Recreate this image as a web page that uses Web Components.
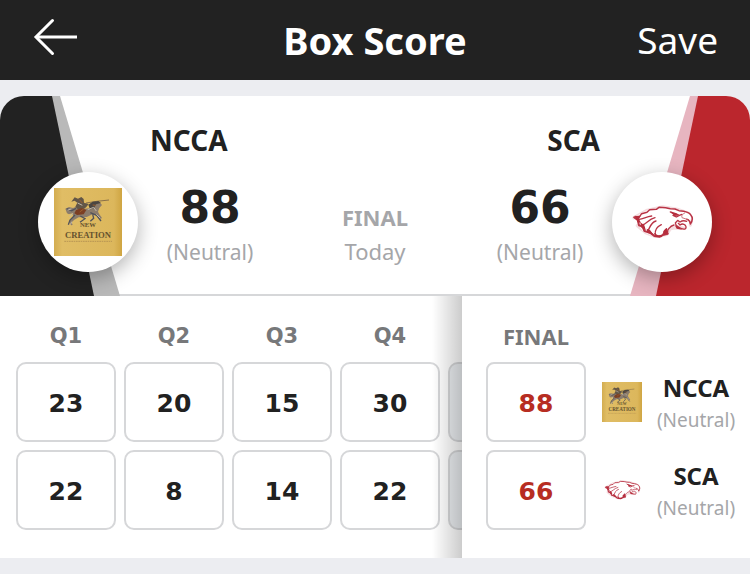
<!DOCTYPE html>
<html lang="en">
<head>
<meta charset="utf-8">
<meta name="viewport" content="width=device-width, initial-scale=1">
<title>Box Score</title>
<style>
  body {
    margin: 0;
    background: #ecedf1;
    color: #212121;
    font-family: "Noto Sans", "Open Sans", sans-serif;
    --digits: "DejaVu Sans", "Noto Sans", sans-serif;
    --line: #d6d7d9;
    --muted: #a5a6a9;
    --label: #77787a;
  }
</style>
</head>
<body>
<box-score-page></box-score-page>

<script>
const define = (name, html, setup) => {
  const template = document.createElement('template');
  template.innerHTML = html;
  customElements.define(name, class extends HTMLElement {
    constructor() {
      super();
      this.attachShadow({ mode: 'open' }).append(template.content.cloneNode(true));
    }
    connectedCallback() {
      if (setup) setup(this, this.shadowRoot);
    }
  });
};

/* Team logos */
const logos = {
  ncca: `
    <svg viewBox="42 39 204 204" role="img" aria-label="NCCA logo">
      <defs><linearGradient id="gold" x1="0" y1="0" x2="1" y2="0">
        <stop offset="0" stop-color="#d3ad51"/><stop offset=".12" stop-color="#e0bd65"/>
        <stop offset=".88" stop-color="#dcb75c"/><stop offset="1" stop-color="#cfa542"/>
      </linearGradient></defs>
      <path fill="url(#gold)" d="M42 39h204v204H42z"/>
      <path fill="none" stroke="#776044" stroke-width="2.5" d="M138 84l32-5 37-4"/>
      <path fill="#8b7c6c" d="M76 101l11-5 12 3 9-4 17 7 24-2 10-11 10-8 11 2 6 7-8 9-4 11 4 8 8 11-5 3-12-11-11-3-18 8-24 1-13 7-8 8 3 8-5 1-5-12 12-14-3-10-10 3-6-3z"/>
      <path fill="#625647" d="M104 67l10 4 10-5 7 6 1 11 14 4-7 9-11 9-15-3-7-7 6-12-8-6-10 3z"/>
      <path fill="#7c3f23" d="M108 105l17-6 14 6-8 13-20 2-8-5z"/>
      <path fill="#4b4642" d="M145 89l13-9 17-2 8 6-15 4-6 11-12 4z"/>
      <path fill="none" stroke="#52535a" stroke-width="4" d="M80 101l15 6 13-7 M151 113l19 8 13 17 M105 120l-15 15-5 14 M121 123l14 8-15 11 M158 118l3 12-10 9"/>
      <path fill="none" stroke="#c1b8aa" stroke-width="3" d="M83 105l11-3 M98 115l-9 10 M143 104l18-7 8 11 M169 118l12 12 M113 84l14 7 M95 140l-3 8"/>
      <path fill="none" stroke="#9e602e" stroke-width="3" d="M118 74l9 10 M119 111l12-9 M158 90l9 1"/>
      <text x="144" y="157" text-anchor="middle" font-family="Liberation Serif, serif" font-weight="bold" font-size="20" fill="#65532f">NEW</text>
      <text x="144" y="189" text-anchor="middle" font-family="Liberation Serif, serif" font-weight="bold" font-size="26" fill="#65532f">CREATION</text>
      <path stroke="#b89653" stroke-width="3" stroke-dasharray="5 2" d="M73 199h143"/>
    </svg>`,
  sca: `
    <svg viewBox="42 39 204 204" role="img" aria-label="SCA logo" fill="none" stroke="#b93446" stroke-linejoin="round" stroke-linecap="round">
      <path stroke="#f4dde0" stroke-width="10" d="M60 128l40-22 46-10 44 7 34 12 9 17-4 18 M212 160l-22-4-22 6-10 16-34 6-30-12-24-20z"/>
      <path fill="#fff" stroke="none" d="M60 127l40-21 46-9 44 7 34 10 10 18-14 6-24-6-6 16-22 12-20 18-30 5-30-12-20-30z"/>
      <path stroke-width="4.500" d="M60 127l17-3 6-8 16-4 8-8 20-1 8-6 20 1 14 3 14 1 12 5 14 2c10 2 17 5 21 10 6 7 6 18-1 28-1-8-5-13-11-14"/>
      <path stroke-width="6" d="M62 128l9 7 4 16 11 4 5 13 17 5 13 10 16 2 12-6 12-3"/>
      <path stroke-width="4" d="M75 133c14-2 22-8 38-10 M85 150c13-3 18-17 38-22 M103 165c7-13 9-23 23-27 M124 179c-2-14 7-25 18-30 M147 179c2-7 2-12 10-18"/>
      <path stroke-width="4" d="M161 176c0-8-2-12 4-16 4-5 8-8 15-10"/>
      <path stroke-width="4" d="M169 111c8 6 16 8 27 10l8-3 M177 121l10 5 9-5"/>
      <path stroke-width="4" d="M218 139c-8-3-14-2-20 2l-7-5-7 8c0 6 4 9 9 12 8 5 15 8 20 6 4-2 4-7 1-11-5-5-11-5-16-1l-5-5"/>
      <path stroke="#cf7480" stroke-width="3" d="M212 114c-8 4-10 9-8 14l15 5"/>
      <path fill="#b62e3d" stroke="none" d="M62 122l18 2-5 8 6 12-9-2z M79 142l12 9 5 16-15-10z M98 161l10 4 12 16-20-8z M119 173l13 8 15-1-5 7-17-1z M148 168l11-9 2 15-11 7z M169 109l19 6 9 6-16 2z M182 150l12 5 10 9-16-3z"/>
    </svg>`
};

define('team-logo', `
  <style>
    :host { display: block; width: var(--logo-size, 40px); }
    svg { display: block; width: 100%; height: auto; }
  </style>`,
  (el, root) => root.append(document.createRange().createContextualFragment(logos[el.getAttribute('team')])));

define('app-bar', `
  <style>
    :host {
      display: grid; grid-template-columns: 1fr auto 1fr; align-items: center;
      min-height: 80px; padding: 0 32px; box-sizing: border-box;
      background: #222; color: #fff;
    }
    button { border: 0; padding: 0; background: none; color: inherit; font: inherit; cursor: pointer; }
    .back { justify-self: start; }
    .save { justify-self: end; font-size: 37px; line-height: 48px; }
    h1 { margin: 0; font-size: 38px; line-height: 48px; font-weight: 700; }
    svg { display: block; margin-bottom: 6px; }
  </style>
  <button class="back" aria-label="Back">
    <svg width="46" height="40" viewBox="0 0 46 40" fill="none" stroke="#fff" stroke-width="3">
      <path d="M20.500 3.500L4 20l16.500 16.500" stroke-linecap="round"/><path d="M4 20h41"/>
    </svg>
  </button>
  <h1><slot></slot></h1>
  <button class="save">Save</button>`);

define('team-badge', `
  <style>
    :host { display: grid; height: 100%; }
    .art, .disc { grid-area: 1 / 1; }
    .art { width: 150px; height: 100%; }
    :host([side="away"]) .art { transform: scaleX(-1); }
    .disc {
      justify-self: start; align-self: end; margin: 0 0 24px 38px;
      display: grid; place-items: center; width: 100px; height: 100px;
      border-radius: 50%; background: #fff; box-shadow: 0 6px 20px rgba(0,0,0,.3); z-index: 1;
      --logo-size: 68px;
    }
    :host([side="away"]) .disc { justify-self: end; margin: 0 38px 24px 0; }
    .main { fill: var(--team); }
    .tint { fill: var(--tint); }
  </style>
  <svg class="art" viewBox="0 0 150 200" preserveAspectRatio="none" aria-hidden="true">
    <path class="tint" d="M51 0h9l60 200H93z"/><path class="main" d="M0 0h52l42 200H0z"/>
  </svg>
  <div class="disc"><slot></slot></div>`);

define('team-score', `
  <style>
    :host { display: flex; flex-direction: column; padding-top: 24px; }
    h2 { margin: 0; font-size: 28px; line-height: 40px; font-weight: 700; }
    :host([side="away"]) h2 { text-align: right; }
    .score { margin-top: 16px; text-align: center; font: 700 44px/64px var(--digits); }
    .site { text-align: center; font-size: 21px; line-height: 24px; color: var(--muted); }
  </style>
  <h2><slot name="name"></slot></h2>
  <div class="score"><slot name="score"></slot></div>
  <div class="site"><slot></slot></div>`);

define('game-header', `
  <style>
    :host {
      display: grid; grid-template-columns: 150px 120px 1fr 120px 150px;
      min-height: 200px; margin-top: 16px; background: #fff;
      border-radius: 24px 24px 0 0; overflow: hidden;
      box-shadow: inset 0 -2px var(--line);
    }
    .status { display: flex; flex-direction: column; padding-top: 104px; text-align: center; color: var(--muted); font-size: 22px; line-height: 34px; }
    strong { font-weight: 700; }
    .home { --team: #222; --tint: #b9b9b9; }
    .away { --team: #bb262d; --tint: #e7b5c0; }
  </style>
  <team-badge class="home" side="home"><team-logo team="ncca"></team-logo></team-badge>
  <team-score side="home"><span slot="name">NCCA</span><span slot="score">88</span>(Neutral)</team-score>
  <div class="status"><strong>FINAL</strong><span>Today</span></div>
  <team-score side="away"><span slot="name">SCA</span><span slot="score">66</span>(Neutral)</team-score>
  <team-badge class="away" side="away"><team-logo team="sca"></team-logo></team-badge>`);

define('score-cell', `
  <style>
    :host { display: block; width: 100px; }
    input, output {
      display: block; box-sizing: border-box; width: 100%; height: 80px; margin: 0; padding: 2px 0 0;
      border: 2px solid var(--line); border-radius: 10px; background: #fff; color: inherit;
      font: 700 25px/76px var(--digits); text-align: center;
    }
    output { color: #b72d22; border-radius: 8px; }
    input:disabled { background: #eceff2; }
  </style>`,
  (el, root) => {
    const total = el.hasAttribute('total');
    const field = document.createElement(total ? 'output' : 'input');
    field.setAttribute('aria-label', el.getAttribute('label'));
    if (!total) {
      field.type = 'text';
      field.inputMode = 'numeric';
      field.disabled = el.hasAttribute('disabled');
    }
    field.value = el.getAttribute('value') || '';
    root.append(field);
  });

const tableStyles = `
  table { border-collapse: separate; border-spacing: 0; }
  th, td { padding: 0 8px 8px 0; font-weight: inherit; }
  tr:last-child > td, tr:last-child > th { padding-bottom: 0; }
  thead th, thead tr:last-child > th, thead td { height: 32px; padding-bottom: 10px; font-size: 22px; line-height: 32px; font-weight: 700; color: var(--label); }`;

define('quarter-table', `
  <style>
    :host { display: block; overflow: hidden; padding: 24px 0 28px 16px; }
    ${tableStyles}
    thead tr:last-child > th { font: 700 21px/32px var(--digits); }
  </style>
  <table aria-label="Points by quarter"><thead><tr></tr></thead><tbody></tbody></table>`,
  (el, root) => {
    const periods = ['Q1', 'Q2', 'Q3', 'Q4', ''];
    const teams = [['NCCA', [23, 20, 15, 30, '']], ['SCA', [22, 8, 14, 22, '']]];
    root.querySelector('thead tr').innerHTML =
      periods.map(p => p ? `<th scope="col">${p}</th>` : '<td></td>').join('');
    root.querySelector('tbody').innerHTML = teams.map(([team, points]) => '<tr>' + points.map((v, i) =>
      `<td><score-cell label="${team} ${periods[i] || 'overtime'}" value="${v}"${v === '' ? ' disabled' : ''}></score-cell></td>`
    ).join('') + '</tr>').join('');
  });

define('team-label', `
  <style>
    :host { display: grid; grid-template-columns: 40px 80px; column-gap: 14px; align-items: center; text-align: center; }
    .text { padding-top: 4px; }
    .name { font-size: 24px; line-height: 32px; font-weight: 700; }
    .site { font-size: 19px; line-height: 32px; font-weight: 400; color: var(--muted); }
  </style>
  <slot name="logo"></slot>
  <div class="text"><div class="name"><slot></slot></div><div class="site">(Neutral)</div></div>`);

define('final-table', `
  <style>
    :host { display: block; padding: 24px 14px 28px 24px; background: #fff; }
    ${tableStyles}
    th, td { padding-right: 0; }
    tbody th { padding-left: 16px; }
  </style>
  <table aria-label="Final score">
    <thead><tr><th scope="col">FINAL</th><td></td></tr></thead>
    <tbody>
      <tr><td><score-cell total label="NCCA final" value="88"></score-cell></td>
        <th scope="row"><team-label><team-logo slot="logo" team="ncca"></team-logo>NCCA</team-label></th></tr>
      <tr><td><score-cell total label="SCA final" value="66"></score-cell></td>
        <th scope="row"><team-label><team-logo slot="logo" team="sca"></team-logo>SCA</team-label></th></tr>
    </tbody>
  </table>`);

define('score-sheet', `
  <style>
    :host { display: grid; grid-template-columns: minmax(0, 1fr) auto; background: #fff; }
    .scroll { position: relative; }
    .scroll::after {
      content: ""; position: absolute; inset: 0 0 0 auto; width: 30px; pointer-events: none;
      background: linear-gradient(to right, transparent, rgba(0,0,0,.08) 40%, rgba(0,0,0,.2));
    }
  </style>
  <div class="scroll"><quarter-table></quarter-table></div>
  <final-table></final-table>`);

define('box-score-page', `
  <style>:host { display: block; }</style>
  <app-bar>Box Score</app-bar>
  <main><game-header></game-header><score-sheet></score-sheet></main>`);
</script>
</body>
</html>
